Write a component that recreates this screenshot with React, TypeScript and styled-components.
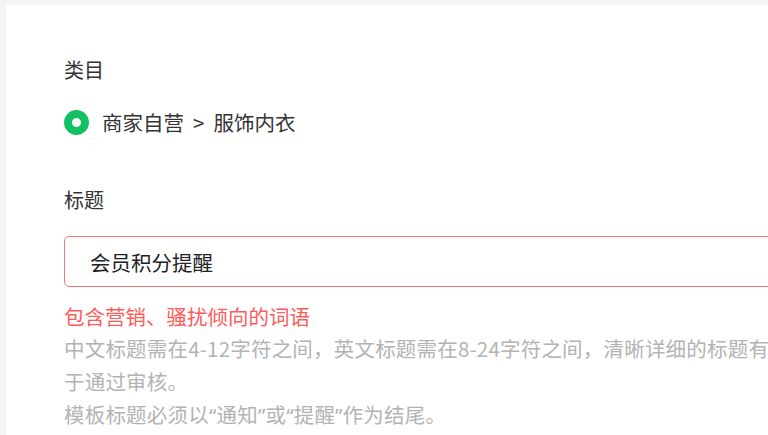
import styled, { createGlobalStyle } from 'styled-components';

const GlobalStyle = createGlobalStyle`
  html, body {
    margin: 0;
    padding: 0;
    background: #f4f5f7;
    overflow: hidden;
  }
  body {
    font-family: "Noto Sans CJK SC", "Noto Sans", sans-serif;
  }
`;

const Page = styled.div`
  padding: 5px 0 0 6px;
  width: 1100px;
  height: 435px;
  box-sizing: border-box;
`;

const Panel = styled.div`
  background: #ffffff;
  height: 100%;
  padding: 51px 0 0 58px;
  box-sizing: border-box;
`;

const Label = styled.div<{ $gap?: number }>`
  font-size: 20px;
  line-height: 28px;
  color: #333333;
  margin-top: ${(p) => p.$gap ?? 0}px;
`;

const CategoryRow = styled.div`
  display: flex;
  align-items: center;
  gap: 13px;
  margin-top: 24px;
  font-size: 20.5px;
  line-height: 28px;
  color: #333333;
`;

const Dot = styled.span`
  width: 25px;
  height: 25px;
  border-radius: 50%;
  border: 8px solid #12c064;
  box-sizing: border-box;
  background: #ffffff;
  flex: none;
`;

const Sep = styled.span`
  margin: 0 9px;
`;

const Input = styled.input`
  display: block;
  margin-top: 22px;
  width: 1000px;
  height: 51px;
  box-sizing: border-box;
  border: 1.5px solid #ff7474;
  border-radius: 5px;
  padding: 0 0 0 25px;
  font-family: inherit;
  font-size: 20.5px;
  color: #222222;
  background: #ffffff;
  outline: none;
`;

const ErrorText = styled.div`
  margin-top: 13px;
  font-size: 20.5px;
  line-height: 32px;
  color: #ff5b5b;
`;

const Hint = styled.div`
  width: 740px;
  font-size: 20.5px;
  letter-spacing: 0.2px;
  line-height: 33px;
  color: #b3b3b3;
`;

const Quote = styled.span`
  font-family: "Noto Sans", sans-serif;
`;

export default function App() {
  return (
    <>
      <GlobalStyle />
      <Page>
        <Panel>
          <Label>类目</Label>
          <CategoryRow>
            <Dot />
            <span>
              商家自营<Sep>&gt;</Sep>服饰内衣
            </span>
          </CategoryRow>
          <Label $gap={50}>标题</Label>
          <Input defaultValue="会员积分提醒" />
          <ErrorText>包含营销、骚扰倾向的词语</ErrorText>
          <Hint>
            中文标题需在4-12字符之间，英文标题需在8-24字符之间，清晰详细的标题有助
            <br />
            于通过审核。
            <br />
            模板标题必须以<Quote>“</Quote>通知<Quote>”</Quote>或<Quote>“</Quote>提醒
            <Quote>”</Quote>作为结尾。
          </Hint>
        </Panel>
      </Page>
    </>
  );
}
